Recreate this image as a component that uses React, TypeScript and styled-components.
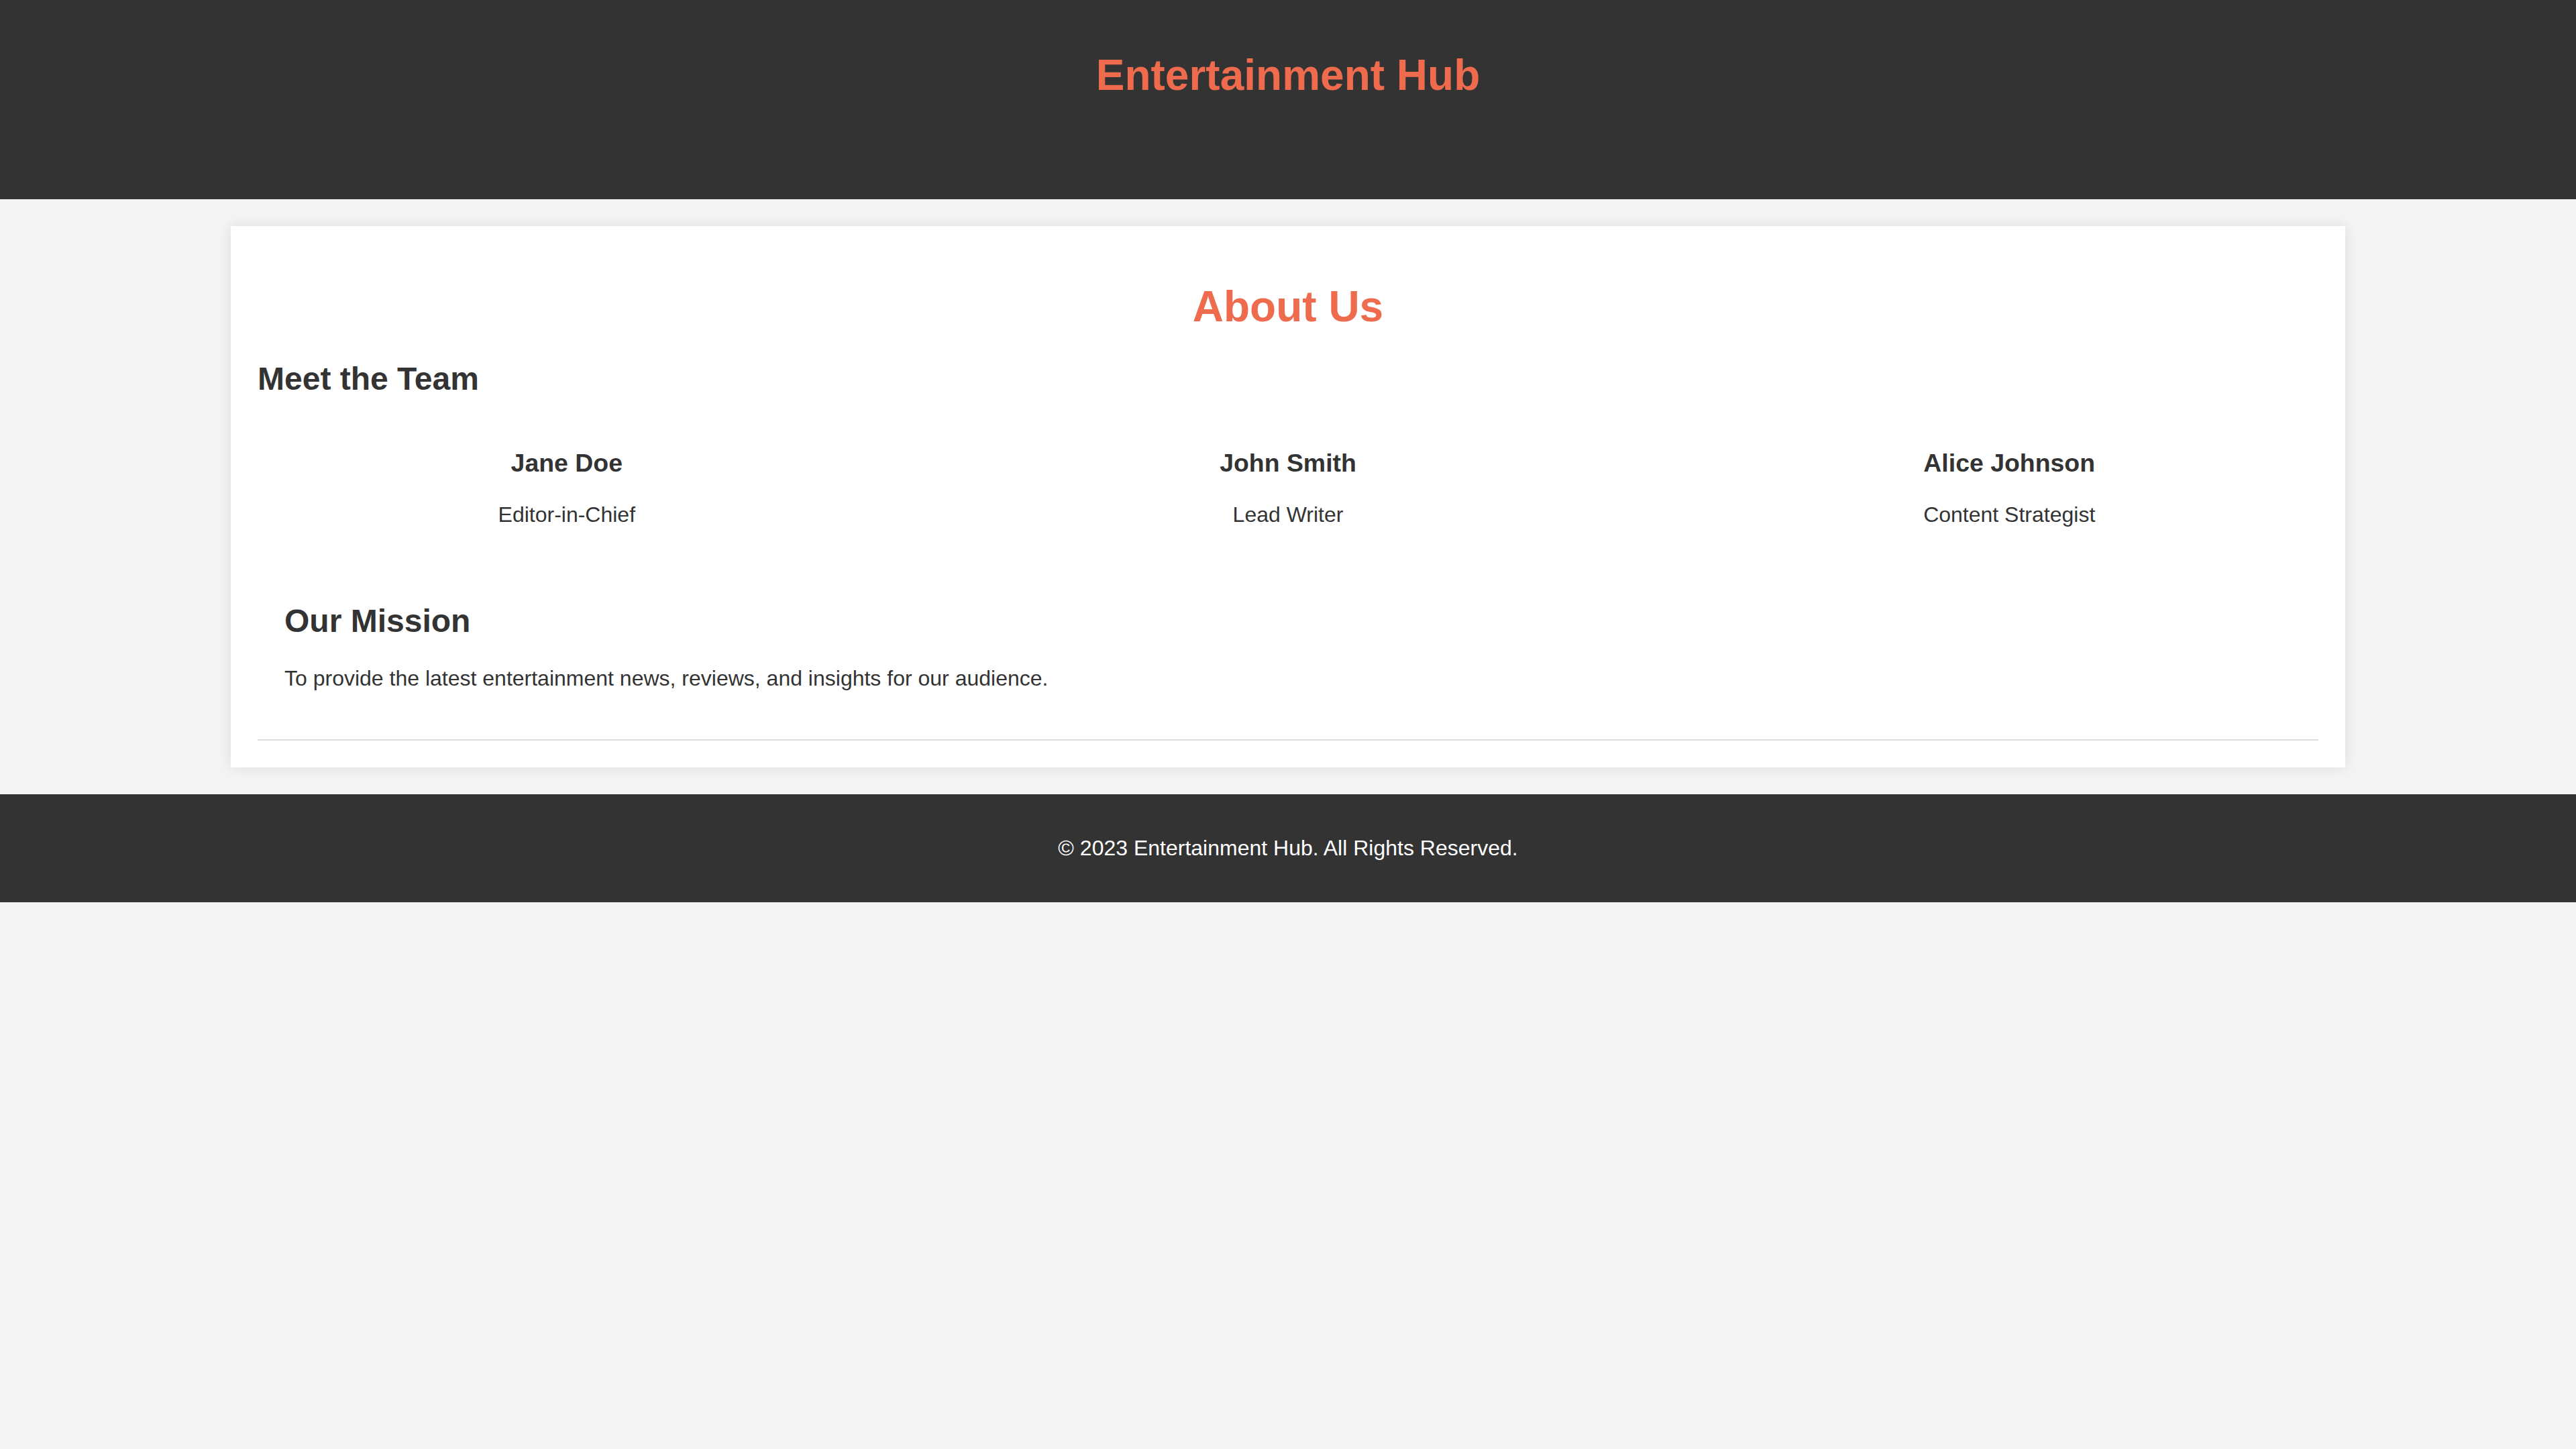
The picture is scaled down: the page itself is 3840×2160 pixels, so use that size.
import React from "react";
import styled, { createGlobalStyle } from "styled-components";

const GlobalStyle = createGlobalStyle`
  html, body {
    margin: 0;
    padding: 0;
  }
  body {
    background: #f4f4f4;
    color: #333;
    font-family: "Liberation Sans", Arial, Helvetica, sans-serif;
    font-size: 32px;
  }
`;

const accent = "#ee6c4d";

const Header = styled.header`
  background: #333;
  color: #fff;
  text-align: center;
  padding: 32px 0 36px;
`;

const SiteTitle = styled.h1`
  font-size: 64px;
  margin: 42.88px 0;
  color: ${accent};
  line-height: normal;
`;

const NavList = styled.ul`
  list-style: none;
  margin: 32px 0;
  padding: 0;
  display: flex;
  justify-content: center;
  gap: 60px;
  line-height: normal;
`;

const NavLink = styled.a`
  color: #333;
  text-decoration: none;
  font-size: 32px;
`;

const Container = styled.main`
  width: 80%;
  margin: 40px auto;
  padding: 40px;
  background: #fff;
  box-shadow: 0 0 20px rgba(0, 0, 0, 0.1);
`;

const PageTitle = styled.h1`
  font-size: 64px;
  margin: 42.88px 0;
  text-align: center;
  color: ${accent};
`;

const SectionTitle = styled.h2`
  font-size: 48px;
  margin: 39.84px 0;
  color: #333;
`;

const Team = styled.div`
  display: flex;
  justify-content: space-between;
  margin: 40px 0 0;
`;

const Member = styled.div`
  width: 30%;
  text-align: center;
`;

const MemberName = styled.h3`
  font-size: 37.44px;
  margin: 37.44px 0;
  color: #333;
`;

const Text = styled.p`
  font-size: 32px;
  margin: 32px 0;
  color: #333;
`;

const Mission = styled.section`
  padding: 40px;
  border-bottom: 2px solid #ddd;
`;

const Footer = styled.footer`
  background: #333;
  color: #fff;
  text-align: center;
  padding: 30px;
`;

const FooterText = styled.p`
  margin: 32px 0;
  font-size: 32px;
`;

const navItems = ["Home", "Movies", "TV Shows", "Music", "About Us"];

const members = [
  { name: "Jane Doe", role: "Editor-in-Chief" },
  { name: "John Smith", role: "Lead Writer" },
  { name: "Alice Johnson", role: "Content Strategist" },
];

export default function App() {
  return (
    <>
      <GlobalStyle />
      <Header>
        <SiteTitle>Entertainment Hub</SiteTitle>
        <nav>
          <NavList>
            {navItems.map((item) => (
              <li key={item}>
                <NavLink href="#">{item}</NavLink>
              </li>
            ))}
          </NavList>
        </nav>
      </Header>
      <Container>
        <PageTitle>About Us</PageTitle>
        <SectionTitle>Meet the Team</SectionTitle>
        <Team>
          {members.map((m) => (
            <Member key={m.name}>
              <MemberName>{m.name}</MemberName>
              <Text>{m.role}</Text>
            </Member>
          ))}
        </Team>
        <Mission>
          <SectionTitle>Our Mission</SectionTitle>
          <Text>
            To provide the latest entertainment news, reviews, and insights for our audience.
          </Text>
        </Mission>
      </Container>
      <Footer>
        <FooterText>© 2023 Entertainment Hub. All Rights Reserved.</FooterText>
      </Footer>
    </>
  );
}
